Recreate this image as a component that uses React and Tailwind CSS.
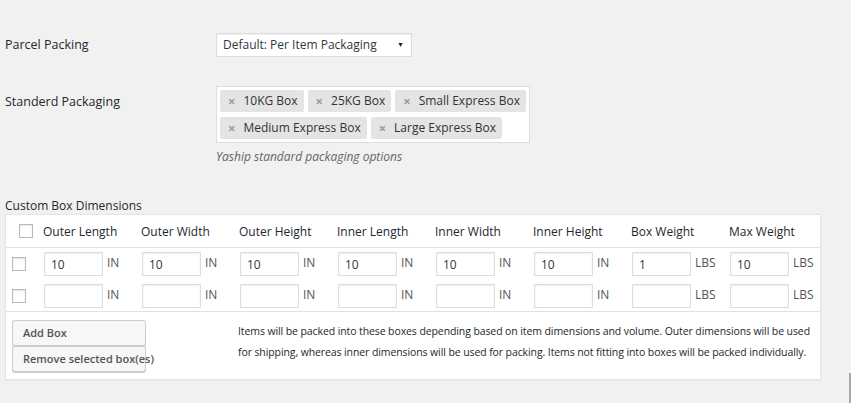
const columns = [
  ["Outer Length", "IN"],
  ["Outer Width", "IN"],
  ["Outer Height", "IN"],
  ["Inner Length", "IN"],
  ["Inner Width", "IN"],
  ["Inner Height", "IN"],
  ["Box Weight", "LBS"],
  ["Max Weight", "LBS"],
];

const boxes = [
  ["10", "10", "10", "10", "10", "10", "1", "10"],
  ["", "", "", "", "", "", "", ""],
];

const tags = [
  ["10KG Box", "25KG Box", "Small Express Box"],
  ["Medium Express Box", "Large Express Box"],
];

function Checkbox() {
  return <div className="w-[14px] h-[14px] bg-white border border-[#b4b9be] shadow-[inset_0_1px_2px_rgba(0,0,0,0.1)]" />;
}

function Tag({ label }) {
  return (
    <div className="flex items-center h-[22px] bg-[#e4e4e4] rounded-[2px] pl-[8px] pr-[6px] text-[#333] whitespace-nowrap">
      <span className="text-[#999] text-[13px] font-bold mr-[8px] leading-none">×</span>
      <span>{label}</span>
    </div>
  );
}

export default function App() {
  return (
    <div className="relative w-[851px] h-[403px] overflow-hidden bg-[#f1f1f1] text-[#23282d] text-[12px] font-['Open_Sans',sans-serif]">
      <div className="pt-[33px] pl-[5px]">
        {/* Parcel Packing */}
        <div className="flex items-center">
          <div className="w-[211px] text-[12.5px]">Parcel Packing</div>
          <div className="w-[196px] h-[24px] flex items-center justify-between pl-[6px] pr-[7px] bg-white border border-[#ddd] shadow-[inset_0_1px_2px_rgba(0,0,0,0.07)] text-[#32373c]">
            <span>Default: Per Item Packaging</span>
            <span className="text-[7px] text-[#222]">▼</span>
          </div>
        </div>

        {/* Standard packaging */}
        <div className="flex items-start mt-[29px]">
          <div className="w-[211px] pt-[7px] leading-[18px] text-[12.5px]">Standerd Packaging</div>
          <div>
            <div className="w-[314px] h-[57px] bg-white border border-[#ddd] p-[3px] flex flex-col gap-[5px]">
              {tags.map((row, i) => (
                <div key={i} className="flex gap-[4px]">
                  {row.map((t) => (
                    <Tag key={t} label={t} />
                  ))}
                </div>
              ))}
            </div>
            <div className="mt-[4px] leading-[20px] italic text-[#666]">Yaship standard packaging options</div>
          </div>
        </div>

        <div className="mt-[31px] leading-[16px]">Custom Box Dimensions</div>

        {/* Table */}
        <div className="w-[816px] bg-white border border-[#e5e5e5] shadow-[0_1px_1px_rgba(0,0,0,0.04)]">
          <div className="grid grid-cols-[38px_repeat(7,98px)_1fr] h-[33px] items-center border-b border-[#e1e1e1]">
            <div className="pl-[13px]">
              <Checkbox />
            </div>
            {columns.map(([name]) => (
              <div key={name} className="-ml-px pt-[1px]">{name}</div>
            ))}
          </div>

          <div className="pt-[4px] pb-[3px] flex flex-col gap-[8px] border-b border-[#e1e1e1]">
            {boxes.map((row, r) => (
              <div key={r} className="grid grid-cols-[38px_repeat(7,98px)_1fr] items-center">
                <div className="pl-[6px]">
                  <Checkbox />
                </div>
                {row.map((v, c) => (
                  <div key={c} className="flex items-center">
                    <div className="w-[59px] h-[24px] bg-white border border-[#ddd] shadow-[inset_0_1px_2px_rgba(0,0,0,0.07)] pl-[6px] pt-[2px] flex items-center text-[#32373c]">
                      {v}
                    </div>
                    <span className="ml-[4px] -mt-[2px] text-[#555]">{columns[c][1]}</span>
                  </div>
                ))}
              </div>
            ))}
          </div>

          <div className="flex pt-[8px] pb-[7px] pl-[6px]">
            <div className="flex flex-col">
              {["Add Box", "Remove selected box(es)"].map((b) => (
                <div
                  key={b}
                  className="w-[134px] h-[26px] flex items-center pl-[10px] whitespace-nowrap bg-[#f7f7f7] border border-[#ccc] rounded-[3px] shadow-[0_1px_0_#ccc] text-[#555] text-[11px] font-semibold"
                >
                  {b}
                </div>
              ))}
            </div>
            <div className="ml-[92px] pt-[1px] text-[10.5px] tracking-[-0.1px] leading-[21px] text-[#23282d]">
              <div className="whitespace-nowrap">Items will be packed into these boxes depending based on item dimensions and volume. Outer dimensions will be used</div>
              <div className="whitespace-nowrap">for shipping, whereas inner dimensions will be used for packing. Items not fitting into boxes will be packed individually.</div>
            </div>
          </div>
        </div>
      </div>

      <div className="absolute right-0 top-[373px] w-[2px] h-[30px] bg-[#a9a9a9]" />
    </div>
  );
}
